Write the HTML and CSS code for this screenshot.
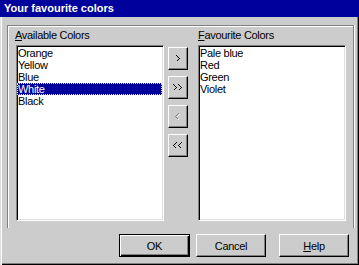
FILE: index.html
```html
<!DOCTYPE html>
<html>
<head>
<meta charset="utf-8">
<link rel="stylesheet" href="styles.css">
</head>
<body>
<div class="title">Your favourite colors</div>
<div class="dialog">
  <div class="frame">
    <div class="col col-left">
      <div class="label"><u>A</u>vailable Colors</div>
      <ul class="list">
        <li>Orange</li>
        <li>Yellow</li>
        <li>Blue</li>
        <li class="sel">White</li>
        <li>Black</li>
      </ul>
    </div>
    <div class="mid">
      <div class="abtn"><svg width="5" height="7" viewBox="0 0 5 7"><polyline points="0.5,0.5 3.5,3.5 0.5,6.5" fill="none" stroke="#000" stroke-width="1"/></svg></div>
      <div class="abtn"><svg width="10" height="7" viewBox="0 0 10 7"><polyline points="0.5,0.5 3.5,3.5 0.5,6.5" fill="none" stroke="#000"/><polyline points="5.5,0.5 8.5,3.5 5.5,6.5" fill="none" stroke="#000"/></svg></div>
      <div class="abtn"><svg width="6" height="8" viewBox="0 0 6 8"><polyline points="4.5,1.5 1.5,4.5 4.5,7.5" fill="none" stroke="#fff"/><polyline points="3.5,0.5 0.5,3.5 3.5,6.5" fill="none" stroke="#808080"/></svg></div>
      <div class="abtn"><svg width="10" height="7" viewBox="0 0 10 7"><polyline points="3.5,0.5 0.5,3.5 3.5,6.5" fill="none" stroke="#000"/><polyline points="8.5,0.5 5.5,3.5 8.5,6.5" fill="none" stroke="#000"/></svg></div>
    </div>
    <div class="col col-right">
      <div class="label"><u>F</u>avourite Colors</div>
      <ul class="list">
        <li>Pale blue</li>
        <li>Red</li>
        <li>Green</li>
        <li>Violet</li>
      </ul>
    </div>
  </div>
  <div class="actions">
    <div class="btn btn-default btn-ok">OK</div>
    <div class="btn btn-cancel">Cancel</div>
    <div class="btn btn-help"><u>H</u>elp</div>
  </div>
</div>
</body>
</html>
```
FILE: styles.css
```css
html, body {
  margin: 0;
  padding: 0;
  background: #cccccc;
}
body {
  width: 359px;
  height: 265px;
  overflow: hidden;
  font-family: "Liberation Sans", Arial, sans-serif;
  font-size: 11px;
  letter-spacing: -0.3px;
  color: #000;
}
.title {
  height: 17px;
  line-height: 17px;
  background: #00009c;
  color: #fff;
  font-weight: bold;
  font-size: 11px;
  letter-spacing: 0;
  padding-left: 4px;
  white-space: nowrap;
}
.dialog {
  box-sizing: border-box;
  height: 248px;
  padding: 8px 0 0 7px;
  box-shadow: inset 1px 0 0 #dfdfdf, inset 2px 0 0 #fff, inset -1px -1px 0 #000, inset -2px -2px 0 #808080;
}
.frame {
  box-sizing: border-box;
  width: 347px;
  height: 203px;
  border: 1px solid #808080;
  border-bottom: none;
  box-shadow: inset 1px 1px 0 #fff, 1px 0 0 #fff;
  padding: 3px 7px 0 7px;
  display: flex;
  align-items: flex-start;
}
.col-left {
  width: 149px;
}
.col-left .list {
  margin-left: 1px;
}
.col-right {
  width: 148px;
  margin-left: 10px;
}
.label {
  height: 13px;
  line-height: 13px;
  margin-bottom: 3px;
  white-space: nowrap;
}
.list {
  box-sizing: border-box;
  width: 148px;
  height: 176px;
  margin: 0;
  padding: 1px 1px 0 0;
  list-style: none;
  background: #fff;
  border-top: 1px solid #808080;
  border-left: 1px solid #808080;
  border-right: 1px solid #fff;
  border-bottom: 1px solid #fff;
  box-shadow: inset 1px 1px 0 #000, inset -1px -1px 0 #dfdfdf;
}
.list li {
  height: 12px;
  line-height: 12px;
  padding-left: 1px;
  white-space: nowrap;
}
.list li.sel {
  background: #00009c;
  color: #fff;
  outline: 1px dotted #e8e8a0;
  outline-offset: -1px;
}
.mid {
  width: 20px;
  margin-left: 4px;
  margin-top: 18px;
  display: flex;
  flex-direction: column;
  gap: 6px;
}
.abtn {
  box-sizing: border-box;
  height: 23px;
  background: #cccccc;
  border-top: 1px solid #fff;
  border-left: 1px solid #fff;
  border-right: 1px solid #000;
  border-bottom: 1px solid #000;
  box-shadow: inset -1px -1px 0 #808080;
  display: flex;
  align-items: center;
  justify-content: center;
}
.abtn svg {
  display: block;
  shape-rendering: crispEdges;
}
.actions {
  display: flex;
  margin-top: 6px;
}
.btn {
  box-sizing: border-box;
  height: 23px;
  width: 70px;
  border-top: 1px solid #fff;
  border-left: 1px solid #fff;
  border-right: 1px solid #000;
  border-bottom: 1px solid #000;
  box-shadow: inset -1px -1px 0 #808080;
  display: flex;
  align-items: center;
  justify-content: center;
}
.btn-default {
  border: 1px solid #000;
  box-shadow: inset 1px 1px 0 #fff, inset -1px -1px 0 #000, inset -2px -2px 0 #808080;
}
.btn-ok {
  width: 71px;
  margin-left: 112px;
}
.btn-cancel {
  margin-left: 6px;
}
.btn-help {
  margin-left: 13px;
}
```
